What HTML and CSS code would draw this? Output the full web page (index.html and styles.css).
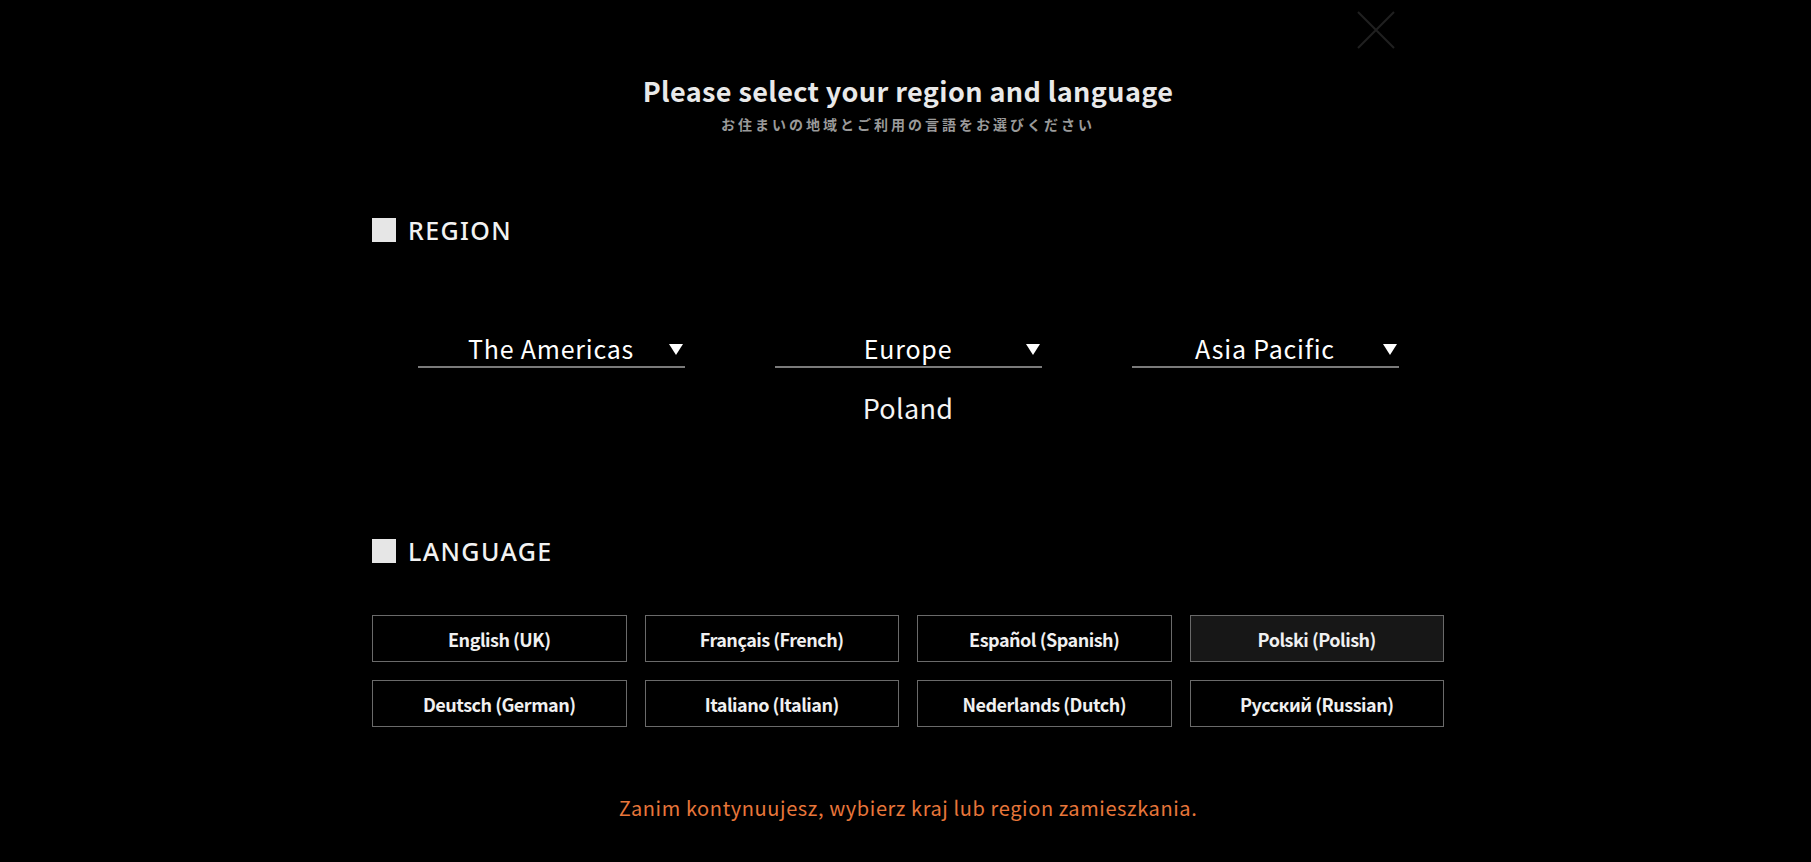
FILE: index.html
```html
<!DOCTYPE html>
<html lang="ja">
<head>
    <meta charset="UTF-8" />
    <meta name="viewport" content="width=device-width, initial-scale=1.0"/>
    <title>Region and Language</title>
    <link rel="stylesheet" href="styles.css">
</head>
<body>
    <div class="modal">
        <!-- Close -->
        <button class="close-btn" aria-label="Close">
            <svg width="38" height="38" viewBox="0 0 38 38">
                <path d="M1 1 L37 37 M37 1 L1 37" stroke="#202020" stroke-width="2" fill="none"/>
            </svg>
        </button>

        <div class="modal-head">
            <h1>Please select your region and language</h1>
            <p class="sub">お住まいの地域とご利用の言語をお選びください</p>
        </div>

        <!-- Region -->
        <h2 class="section-title"><span class="sq"></span>REGION</h2>
        <div class="region-row">
            <div class="region-col">
                <div class="dropdown"><span>The Americas</span><i class="tri"></i></div>
            </div>
            <div class="region-col">
                <div class="dropdown"><span>Europe</span><i class="tri"></i></div>
                <div class="country">Poland</div>
            </div>
            <div class="region-col">
                <div class="dropdown"><span>Asia Pacific</span><i class="tri"></i></div>
            </div>
        </div>

        <!-- Language -->
        <h2 class="section-title lang-title"><span class="sq"></span>LANGUAGE</h2>
        <div class="lang-grid">
            <button class="lang">English (UK)</button>
            <button class="lang">Français (French)</button>
            <button class="lang">Español (Spanish)</button>
            <button class="lang active">Polski (Polish)</button>
            <button class="lang">Deutsch (German)</button>
            <button class="lang">Italiano (Italian)</button>
            <button class="lang">Nederlands (Dutch)</button>
            <button class="lang">Русский (Russian)</button>
        </div>

        <p class="notice">Zanim kontynuujesz, wybierz kraj lub region zamieszkania.</p>
    </div>
</body>
</html>
```

FILE: styles.css
```css
body {
    margin: 0;
    padding: 0 0 0 5px;
    background: #000;
    color: #f2f2f2;
    font-family: "Noto Sans CJK JP", "Noto Sans", sans-serif;
}

.modal {
    position: relative;
    width: 1072px;
    margin: 0 auto;
    padding-top: 73px;
}

.close-btn {
    position: absolute;
    top: 11px;
    right: 49px;
    padding: 0;
    border: none;
    background: none;
    cursor: pointer;
}

.close-btn svg {
    display: block;
}

.modal-head {
    text-align: center;
}

h1 {
    margin: 0;
    font-size: 27px;
    font-weight: 700;
    line-height: 36px;
    letter-spacing: 0.4px;
    color: #e9e9e9;
}

.sub {
    margin: 4px 0 0 0;
    font-size: 14px;
    line-height: 22px;
    letter-spacing: 3px;
    color: #9a9a9a;
    font-weight: 700;
}

.section-title {
    display: flex;
    align-items: center;
    margin: 80px 0 0 0;
    font-family: "Noto Sans", sans-serif;
    font-size: 25px;
    font-weight: 500;
    line-height: 30px;
    letter-spacing: 1.4px;
    color: #f2f2f2;
}

.sq {
    display: inline-block;
    width: 24px;
    height: 24px;
    background: #e6e6e6;
    margin-right: 12px;
}

.region-row {
    display: flex;
    justify-content: center;
    gap: 90px;
    margin-top: 85px;
}

.region-col {
    width: 267px;
}

.dropdown {
    position: relative;
    text-align: center;
    border-bottom: 2px solid #7a7a7a;
    font-size: 25px;
    line-height: 36px;
    letter-spacing: 0.8px;
    color: #fff;
}

.tri {
    position: absolute;
    right: 2px;
    top: 14px;
    width: 0;
    height: 0;
    border-left: 7px solid transparent;
    border-right: 7px solid transparent;
    border-top: 11px solid #fff;
}

.country {
    margin-top: 22px;
    text-align: center;
    font-size: 27px;
    line-height: 36px;
    letter-spacing: 0.3px;
    color: #f4f4f4;
}

.lang-title {
    margin-top: 110px;
}

.lang-grid {
    display: grid;
    grid-template-columns: repeat(4, 1fr);
    column-gap: 18px;
    row-gap: 18px;
    margin-top: 49px;
}

.lang {
    height: 47px;
    border: 1px solid #6a6a6a;
    background: #000;
    color: #f0f0f0;
    font-family: "Noto Sans CJK JP", "Noto Sans", sans-serif;
    font-size: 18px;
    font-weight: 700;
    letter-spacing: -0.5px;
    cursor: pointer;
}

.lang.active {
    background: #171717;
}

.notice {
    margin: 66px 0 0 0;
    text-align: center;
    font-size: 20px;
    letter-spacing: 0.6px;
    color: #e8763a;
}
```
